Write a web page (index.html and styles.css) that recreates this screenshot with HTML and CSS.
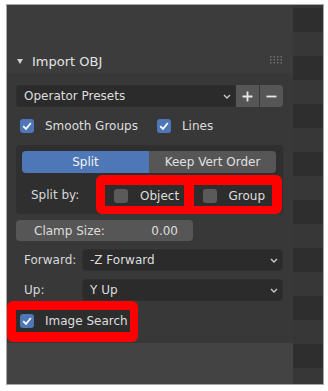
FILE: index.html
```html
<!DOCTYPE html>
<html>
<head>
<meta charset="utf-8">
<link rel="stylesheet" href="styles.css">
</head>
<body>
<div class="frame">
  <div class="panel">
    <div class="top"></div>
    <div class="header">
      <svg class="tri" width="6" height="5" viewBox="0 0 6 5"><path d="M0 0H6L3 5Z" fill="#d0d0d0"/></svg>
      <span class="title">Import OBJ</span>
      <svg class="grip" width="13" height="8" viewBox="0 0 13 8">
        <g fill="#707070">
          <rect x="0" y="0" width="1.5" height="1.5"/><rect x="3.5" y="0" width="1.5" height="1.5"/><rect x="7" y="0" width="1.5" height="1.5"/><rect x="10.5" y="0" width="1.5" height="1.5"/>
          <rect x="0" y="3" width="1.5" height="1.5"/><rect x="3.5" y="3" width="1.5" height="1.5"/><rect x="7" y="3" width="1.5" height="1.5"/><rect x="10.5" y="3" width="1.5" height="1.5"/>
          <rect x="0" y="6" width="1.5" height="1.5"/><rect x="3.5" y="6" width="1.5" height="1.5"/><rect x="7" y="6" width="1.5" height="1.5"/><rect x="10.5" y="6" width="1.5" height="1.5"/>
        </g>
      </svg>
    </div>
    <div class="body">
      <div class="presets">
        <div class="menu">
          <span>Operator Presets</span>
          <svg class="chev" width="8" height="5" viewBox="0 0 8 5"><path d="M1 1L4 4L7 1" fill="none" stroke="#c8c8c8" stroke-width="1.4"/></svg>
        </div>
        <div class="btns">
          <div class="btn"><svg width="11" height="11" viewBox="0 0 11 11"><path d="M5.5 0.5V10.5M0.5 5.5H10.5" stroke="#e6e6e6" stroke-width="1.8"/></svg></div>
          <div class="btn"><svg width="11" height="11" viewBox="0 0 11 11"><path d="M0.5 5.5H10.5" stroke="#e6e6e6" stroke-width="1.8"/></svg></div>
        </div>
      </div>
      <div class="checks">
        <div class="check"><span class="cb on"><svg width="14" height="14" viewBox="0 0 14 14"><path d="M3.2 7.2L6 10L10.8 4" fill="none" stroke="#fff" stroke-width="1.8"/></svg></span><span>Smooth Groups</span></div>
        <div class="check"><span class="cb on"><svg width="14" height="14" viewBox="0 0 14 14"><path d="M3.2 7.2L6 10L10.8 4" fill="none" stroke="#fff" stroke-width="1.8"/></svg></span><span>Lines</span></div>
      </div>
      <div class="box">
        <div class="toggle">
          <div class="seg on">Split</div>
          <div class="seg">Keep Vert Order</div>
        </div>
        <div class="splitby">
          <span class="lbl">Split by:</span>
          <div class="mark pair">
            <div class="item"><span class="cb"></span><span>Object</span></div>
            <div class="item"><span class="cb"></span><span>Group</span></div>
          </div>
        </div>
      </div>
      <div class="slider"><span>Clamp Size:</span><span>0.00</span></div>
      <div class="prop forward">
        <span class="plbl">Forward:</span>
        <div class="menu">
          <span>-Z Forward</span>
          <svg class="chev" width="8" height="5" viewBox="0 0 8 5"><path d="M1 1L4 4L7 1" fill="none" stroke="#c8c8c8" stroke-width="1.4"/></svg>
        </div>
      </div>
      <div class="prop">
        <span class="plbl">Up:</span>
        <div class="menu">
          <span>Y Up</span>
          <svg class="chev" width="8" height="5" viewBox="0 0 8 5"><path d="M1 1L4 4L7 1" fill="none" stroke="#c8c8c8" stroke-width="1.4"/></svg>
        </div>
      </div>
      <div class="mark single">
        <div class="item wide"><span class="cb on"><svg width="14" height="14" viewBox="0 0 14 14"><path d="M3.2 7.2L6 10L10.8 4" fill="none" stroke="#fff" stroke-width="1.8"/></svg></span><span>Image Search</span></div>
      </div>
    </div>
    <div class="foot"></div>
  </div>
  <div class="strip"></div>
</div>
</body>
</html>
```

FILE: styles.css
```css
* { box-sizing: border-box; }
html, body { margin: 0; padding: 0; background: #ffffff; }
body {
  font-family: "DejaVu Sans", "Liberation Sans", sans-serif;
  font-size: 12px;
  color: #dedede;
}
.frame {
  margin: 4px 0 0 6px;
  width: 318px;
  height: 381px;
  border: 1px solid #a8a8a8;
  display: flex;
  background: #383838;
}
.panel {
  width: 286px;
  display: flex;
  flex-direction: column;
}
.top { height: 44px; background: #3c3c3c; }
.header {
  height: 24px;
  background: #3c3c3c;
  display: flex;
  align-items: center;
  padding: 0 10px;
}
.title {
  margin-left: 9px;
  font-size: 13px;
  color: #e4e4e4;
  flex: 1;
}
.grip { display: block; margin-top: -2px; }
.body {
  height: 270px;
  background: #383838;
  padding: 12px 10px 0 9px;
  display: flex;
  flex-direction: column;
}
.foot { flex: 1; background: #434343; }
.strip {
  flex: 1;
  background: repeating-linear-gradient(to bottom, #2e2e2e 0 24px, #373737 24px 48px);
  background-position: 0 3px;
}
.presets { display: flex; height: 22px; }
.menu {
  flex: 1;
  background: #2b2b2b;
  border: 1px solid #303030;
  border-radius: 4px;
  display: flex;
  align-items: center;
  justify-content: space-between;
  padding: 0 4px 0 7px;
}
.presets .menu { border-radius: 4px 0 0 4px; }
.btns { display: flex; gap: 1px; }
.btn {
  width: 23px;
  height: 22px;
  background: #565656;
  display: flex;
  align-items: center;
  justify-content: center;
}
.btn:last-child { border-radius: 0 4px 4px 0; }
.checks {
  display: flex;
  height: 22px;
  margin-top: 8px;
  align-items: center;
  padding-left: 4px;
  gap: 19px;
}
.check { display: flex; align-items: center; gap: 11px; }
.cb {
  width: 14px;
  height: 14px;
  border-radius: 3px;
  background: #5a5a5a;
  display: block;
  flex: none;
}
.cb.on { background: #4d77b7; }
.cb svg { display: block; }
.box {
  margin-top: 8px;
  background: #2f2f2f;
  border-radius: 4px;
  padding: 6px 7px 0 6px;
}
.toggle { display: flex; height: 22px; }
.seg {
  flex: 1;
  background: #565656;
  display: flex;
  align-items: center;
  justify-content: center;
  color: #e0e0e0;
}
.seg.on { background: #4d77b7; border-radius: 4px 0 0 4px; color: #f2f2f2; }
.seg:last-child { border-radius: 0 4px 4px 0; }
.splitby {
  display: flex;
  align-items: center;
  margin-top: 2px;
  margin-right: -6px;
}
.lbl { width: 74px; padding-left: 9px; color: #d8d8d8; }
.mark {
  background: #ff0000;
  border-radius: 6px;
  display: flex;
}
.pair {
  flex: 1;
  padding: 10px 10px 8px 9px;
  gap: 10px;
}
.item {
  height: 21px;
  background: #2d2d2d;
  display: flex;
  align-items: center;
  padding-left: 9px;
  gap: 12px;
  flex: 1;
}
.slider {
  margin-top: 6px;
  width: 177px;
  height: 21px;
  background: #565656;
  border-radius: 4px;
  display: flex;
  align-items: center;
  justify-content: space-between;
  padding: 0 15px 0 18px;
}
.prop { display: flex; height: 22px; margin-top: 8px; align-items: center; }
.plbl { width: 66px; padding-left: 8px; color: #d8d8d8; }
.prop .menu { height: 22px; }
.single {
  margin-left: -9px;
  width: 131px;
  padding: 9px 8px 10px 9px;
}
.wide { padding-left: 4px; gap: 11px; height: 22px; }
```
